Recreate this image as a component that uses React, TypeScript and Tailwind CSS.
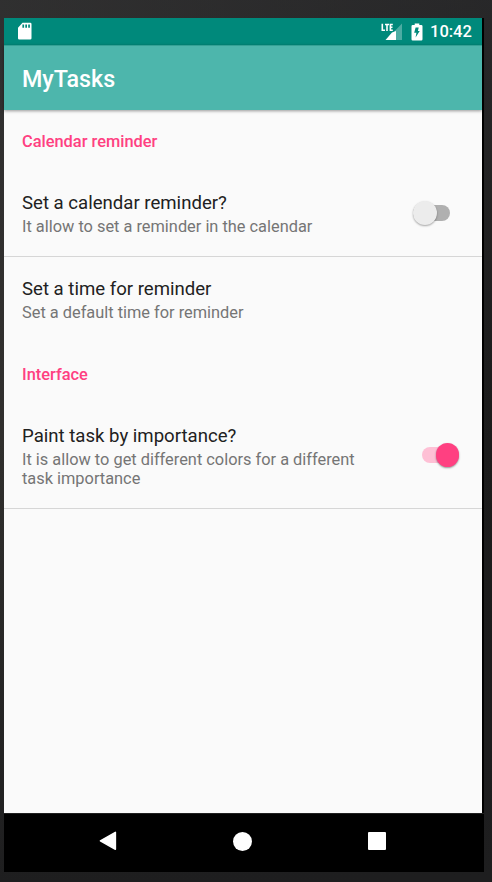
import React from 'react';

function StatusBar() {
  return (
    <div className="flex h-[27px] items-center bg-[#00897b] pl-[13px] pr-[10px] text-white">
      <svg className="block h-[19px] w-[16px]" viewBox="0 0 16 19">
        <path
          fill="currentColor"
          fillRule="evenodd"
          d="M5.500.700h7.700q1.300 0 1.300 1.300v14.200q0 1.300-1.300 1.300H2.300q-1.300 0-1.300-1.300V5.700zM5.400 2.500v3.300h1.700v-3.300zM8.300 2.500v3.300h1.700v-3.300zM11.200 2.500v3.300h1.700v-3.300z"
        />
      </svg>
      <div className="flex-1" />
      <svg className="block h-[18px] w-[21px]" viewBox="0 0 21 18">
        <path fill="currentColor" fillOpacity="0.3" d="M21 0.500V17H5z" />
        <path fill="currentColor" d="M15 8V17H4.500l6.500-7.500z" />
        <path
          fill="none"
          stroke="currentColor"
          strokeWidth="1.600"
          d="M1.300.800v6.500h2.700M4 1.500h4M6 1.500V8M11.800 1.500H9.400v5.800h2.400M9.400 4.300h2.100"
        />
      </svg>
      <svg className="ml-[9px] block h-[18px] w-[12px]" viewBox="0 0 12 18">
        <path
          fill="currentColor"
          fillRule="evenodd"
          d="M3.700.500h4.600v1.500h2q1.200 0 1.200 1.200v13q0 1.200-1.200 1.200H1.700q-1.200 0-1.200-1.200V3.200q0-1.200 1.200-1.200h2zM7.700 4.500H4.600L3.200 9.700h2.200L4.600 14.500 8.700 8H6.900z"
        />
      </svg>
      <span className="ml-[7px] w-[42px] whitespace-nowrap text-[16.5px] font-medium leading-[27px]">10:42</span>
    </div>
  );
}

function Toggle({ on = false }: { on?: boolean }) {
  return on ? (
    <div className="flex h-[24px] w-[37px] items-center">
      <div className="flex h-[16px] w-[37px] items-center justify-end rounded-full bg-[#fec0d5]">
        <div className="size-[23.500px] shrink-0 rounded-full bg-[#ff4081] shadow-[0_1px_2px_rgba(0,0,0,0.4)]" />
      </div>
    </div>
  ) : (
    <div className="flex h-[24px] w-[37px] items-center">
      <div className="flex h-[16px] w-[37px] items-center rounded-full bg-[#b0b0b0]">
        <div className="size-[23.500px] shrink-0 rounded-full bg-[#ececec] shadow-[0_1px_2px_rgba(0,0,0,0.35)]" />
      </div>
    </div>
  );
}

function Category({ children }: { children: React.ReactNode }) {
  return <h2 className="text-[16.4px] font-medium leading-5 text-[#ff4081]">{children}</h2>;
}

function Preference({ title, children }: { title: string; children: React.ReactNode }) {
  return (
    <div className="whitespace-nowrap">
      <div className="text-[18.6px] leading-6 text-[#212121]">{title}</div>
      <div className="mt-[2px] text-[16.38px] leading-[19px] text-[#757575]">{children}</div>
    </div>
  );
}

export default function App() {
  return (
    <div className="h-[882px] w-[492px] bg-linear-to-r from-[#302f2d] to-[#1b1b1b] font-['Roboto',sans-serif]">
      <div className="flex h-full w-full flex-col bg-linear-to-b from-[#303032]/60 via-transparent to-[#1e1e1f] pl-[4px] pt-[18px]">
        <div className="flex h-[854px] w-[480px] flex-col bg-black">
          <div className="flex h-[795px] w-[478px] flex-col bg-[#fafafa]">
            <StatusBar />
            <header className="z-10 flex h-[65px] shrink-0 items-center border-t border-[#35a195] bg-[#4db6ac] pl-[18px] shadow-[0_1px_3px_rgba(0,0,0,0.4)]">
              <h1 className="pt-[2px] text-[23.300px] font-medium leading-8 text-white">MyTasks</h1>
            </header>
            <main className="flex flex-1 flex-col">
              <section className="h-[147px] border-b border-[#d6d6d6] px-[18px] pt-[22px]">
                <Category>Calendar reminder</Category>
                <div className="flex items-start justify-between pt-[39px]">
                  <Preference title="Set a calendar reminder?">It allow to set a reminder in the calendar</Preference>
                  <div className="mr-[14px] mt-[10px]">
                    <Toggle />
                  </div>
                </div>
              </section>
              <section className="h-[252px] border-b border-[#d6d6d6] px-[18px] pt-[20px]">
                <Preference title="Set a time for reminder">Set a default time for reminder</Preference>
                <div className="pt-[43px]">
                  <Category>Interface</Category>
                </div>
                <div className="flex items-start justify-between pt-[39px]">
                  <Preference title="Paint task by importance?">
                    It is allow to get different colors for a different
                    <br />
                    task importance
                  </Preference>
                  <div className="mr-[5px] mt-[19px]">
                    <Toggle on />
                  </div>
                </div>
              </section>
            </main>
          </div>
          <nav className="flex h-[59px] items-center border-t border-[#202020] pb-[4px] pl-[95px]">
            <svg className="block h-[20px] w-[18px]" viewBox="0 0 18 20">
              <path fill="#fff" stroke="#fff" strokeWidth="1.500" strokeLinejoin="round" d="M16.400 1.300v17L1.400 9.800z" />
            </svg>
            <div className="ml-[116px] size-[19px] rounded-full bg-white" />
            <div className="ml-[116px] size-[18px] rounded-[1px] bg-white" />
          </nav>
        </div>
      </div>
    </div>
  );
}
